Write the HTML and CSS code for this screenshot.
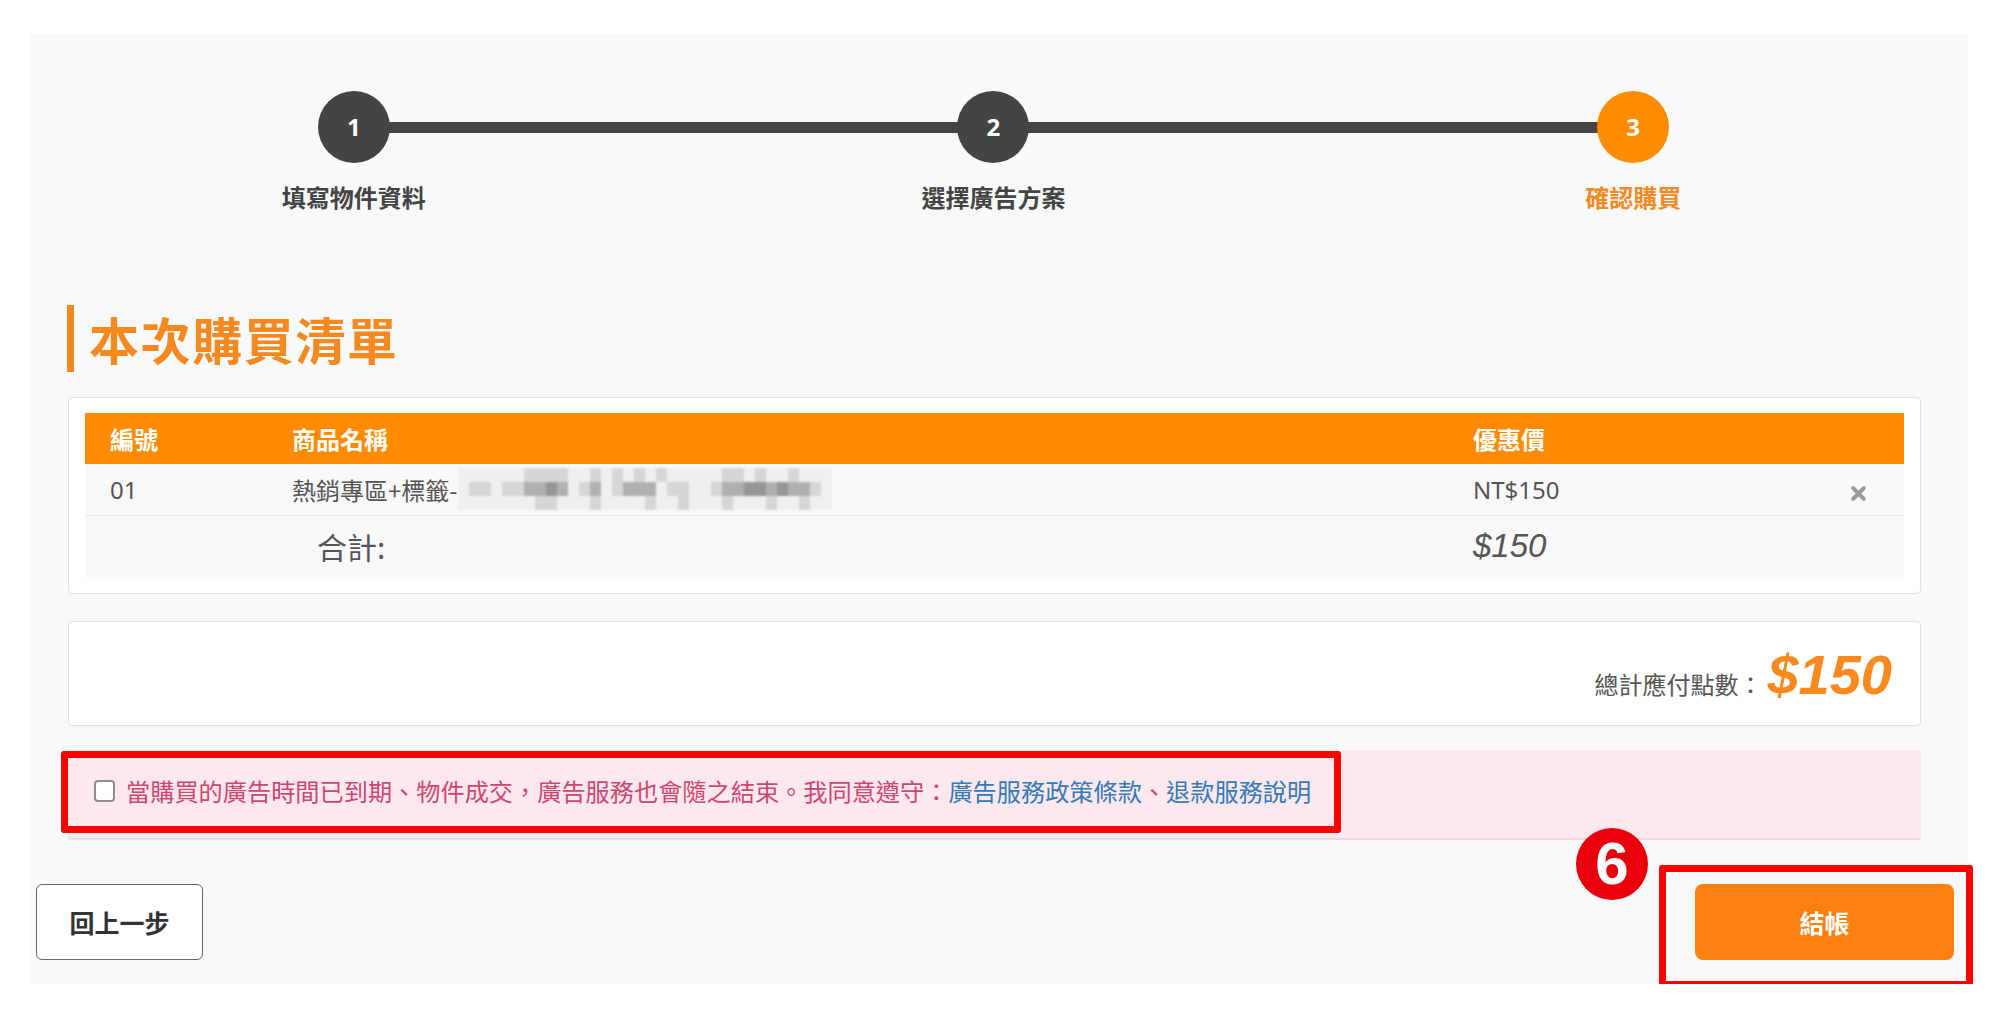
FILE: index.html
```html
<!DOCTYPE html>
<html lang="zh-Hant">
<head>
<meta charset="utf-8">
<title>確認購買</title>
<link rel="stylesheet" href="styles.css">
</head>
<body>
<div class="panel">
  <div class="stepper">
    <div class="step"><div class="dot">1</div><div class="step-label">填寫物件資料</div></div>
    <div class="step"><div class="dot">2</div><div class="step-label">選擇廣告方案</div></div>
    <div class="step active"><div class="dot">3</div><div class="step-label">確認購買</div></div>
  </div>

  <div class="content">
    <h2 class="title">本次購買清單</h2>

    <div class="card cart">
      <table class="cart-table">
        <colgroup>
          <col class="w-no"><col class="w-name"><col class="w-price"><col class="w-act">
        </colgroup>
        <thead>
          <tr><th>編號</th><th>商品名稱</th><th>優惠價</th><th></th></tr>
        </thead>
        <tbody>
          <tr class="item">
            <td class="num">01</td>
            <td><span class="pname">熱銷專區+標籤-</span><span class="mosaic">
<i class="l"></i><i class="l"></i><i class="l"></i><i class="l"></i><i class="l"></i><i class="l"></i><i class="m"></i><i class="m"></i><i class="m"></i><i class="m"></i><i class="l"></i><i class="l"></i><i class="m"></i><i class="l"></i><i class="m"></i><i class="l"></i><i class="m"></i><i class="l"></i><i class="m"></i><i class="l"></i><i class="l"></i><i class="l"></i><i class="l"></i><i class="l"></i><i class="m"></i><i class="m"></i><i class="l"></i><i class="m"></i><i class="l"></i><i class="l"></i><i class="m"></i><i class="l"></i><i class="l"></i><i class="l"></i>
<i class="l"></i><i class="m"></i><i class="m"></i><i class="l"></i><i class="m"></i><i class="m"></i><i class="d"></i><i class="d"></i><i class="k"></i><i class="d"></i><i class="l"></i><i class="m"></i><i class="d"></i><i class="l"></i><i class="m"></i><i class="d"></i><i class="d"></i><i class="d"></i><i class="l"></i><i class="m"></i><i class="m"></i><i class="l"></i><i class="l"></i><i class="m"></i><i class="d"></i><i class="d"></i><i class="k"></i><i class="k"></i><i class="d"></i><i class="k"></i><i class="d"></i><i class="d"></i><i class="m"></i><i class="l"></i>
<i class="l"></i><i class="l"></i><i class="l"></i><i class="l"></i><i class="l"></i><i class="l"></i><i class="l"></i><i class="m"></i><i class="m"></i><i class="l"></i><i class="l"></i><i class="l"></i><i class="m"></i><i class="l"></i><i class="l"></i><i class="l"></i><i class="l"></i><i class="m"></i><i class="l"></i><i class="l"></i><i class="m"></i><i class="l"></i><i class="l"></i><i class="l"></i><i class="m"></i><i class="l"></i><i class="l"></i><i class="l"></i><i class="m"></i><i class="l"></i><i class="l"></i><i class="m"></i><i class="l"></i><i class="l"></i>
</span></td>
            <td class="num">NT$150</td>
            <td class="act">
              <svg class="x-icon" viewBox="0 0 16 16" width="17" height="17" aria-hidden="true">
                <path d="M3 3 L13 13 M13 3 L3 13" stroke="#9a9a9a" stroke-width="3.8" stroke-linecap="round" fill="none"/>
              </svg>
            </td>
          </tr>
          <tr class="sum">
            <td></td>
            <td class="sum-label">合計:</td>
            <td class="sum-val">$150</td>
            <td></td>
          </tr>
        </tbody>
      </table>
    </div>

    <div class="card total">
      <div class="total-line"><span class="total-label">總計應付點數：</span><span class="total-amount">$150</span></div>
    </div>

    <div class="alert">
      <input type="checkbox" class="agree">
      <span class="alert-text">當購買的廣告時間已到期、物件成交，廣告服務也會隨之結束。我同意遵守：<a class="link">廣告服務政策條款</a>、<a class="link">退款服務說明</a></span>
    </div>
  </div>

  <div class="actions">
    <button class="btn btn-back">回上一步</button>
    <button class="btn btn-pay">結帳</button>
  </div>

  <div class="mark mark-terms"></div>
  <div class="mark mark-pay"></div>
  <div class="badge">6</div>
</div>
</body>
</html>
```

FILE: styles.css
```css
* { box-sizing: border-box; }

html, body {
  margin: 0;
  padding: 0;
  background: #ffffff;
}

body {
  font-family: "Noto Sans CJK TC", "Noto Sans", sans-serif;
  color: #555;
}

.panel {
  position: relative;
  margin: 34px 31px 0 31px;
  height: 950px;
  background: #f8f9fa;
  padding-bottom: 24px;
}

/* ---------- stepper ---------- */
.stepper {
  position: relative;
  display: grid;
  grid-template-columns: repeat(3, 1fr);
  margin: 0 15px 0 3px;
  padding-top: 57px;
}

.stepper::before {
  content: "";
  position: absolute;
  top: 88px;
  left: 16.6667%;
  right: 16.6667%;
  height: 11px;
  background: #444;
}

.step {
  display: flex;
  flex-direction: column;
  align-items: center;
}

.dot {
  position: relative;
  z-index: 1;
  width: 72px;
  height: 72px;
  border-radius: 50%;
  background: #444;
  color: #fff;
  font-family: "Noto Sans", sans-serif;
  font-weight: 700;
  font-size: 24px;
  line-height: 72px;
  text-align: center;
}

.step-label {
  margin-top: 16px;
  font-size: 24px;
  line-height: 36px;
  font-weight: 700;
  color: #444;
}

.step.active .dot { background: #fd8c00; }
.step.active .step-label { color: #f08a22; }

/* ---------- content ---------- */
.content {
  margin: 0 47px 0 37px;
}

.title {
  margin: 90px 0 0 -1px;
  height: 67px;
  border-left: 7px solid #f5891f;
  padding-left: 15px;
  font-size: 50px;
  line-height: 67px;
  font-weight: 700;
  letter-spacing: 1.6px;
  color: #f5891f;
}

.card {
  background: #fff;
  border: 1px solid #dfe1e4;
  border-radius: 4px;
}

.cart {
  margin-top: 25px;
  padding: 15px 16px 16px 16px;
}

.cart-table {
  width: 100%;
  table-layout: fixed;
  border-collapse: collapse;
  border-spacing: 0;
}

.w-no { width: 182px; }
.w-name { width: 1181px; }
.w-price { width: 364px; }
.w-act { width: 92px; }

.cart-table th {
  height: 51px;
  padding: 0 0 0 25px;
  background: #fd8b02;
  color: #fff;
  font-size: 24px;
  font-weight: 700;
  text-align: left;
  vertical-align: middle;
}

.cart-table td {
  padding: 0 0 0 25px;
  vertical-align: middle;
  text-align: left;
  white-space: nowrap;
}

.item td {
  height: 51px;
  background: #f9f9f9;
  font-size: 24px;
  color: #555;
}

.item td.num {
  font-family: "Noto Sans", "Noto Sans CJK TC", sans-serif;
}

.pname {
  vertical-align: middle;
}

.mosaic {
  display: inline-grid;
  grid-template-columns: repeat(34, 11px);
  grid-auto-rows: 14px;
  vertical-align: middle;
  filter: blur(0.8px);
}

.mosaic i { display: block; }
.mosaic .l { background: #efefef; }
.mosaic .m { background: #d6d6d6; }
.mosaic .d { background: #b0b0b0; }
.mosaic .k { background: #969696; }

.cart-table td.act {
  padding: 0;
  text-align: center;
}

.x-icon { display: inline-block; vertical-align: middle; }

.sum td {
  height: 62px;
  background: #f9f9f9;
  border-top: 1px solid #e9e9e9;
}

.sum td.sum-label {
  padding-left: 50px;
  font-size: 30px;
  color: #555;
}

.sum td.sum-val {
  font-family: "Liberation Sans", sans-serif;
  font-style: italic;
  font-size: 33px;
  color: #555;
}

/* ---------- total ---------- */
.total {
  margin-top: 27px;
  height: 105px;
  display: flex;
  justify-content: flex-end;
  align-items: flex-end;
  padding: 0 28px 22px 0;
}

.total-line {
  font-size: 24px;
  line-height: 1;
  white-space: nowrap;
}

.total-label {
  color: #555;
  font-size: 24px;
}

.total-amount {
  margin-left: 5px;
  font-family: "Liberation Sans", sans-serif;
  font-weight: 700;
  font-style: italic;
  font-size: 56px;
  line-height: 56px;
  color: #f7891f;
}

/* ---------- alert ---------- */
.alert {
  margin-top: 24px;
  height: 90px;
  display: flex;
  align-items: center;
  padding: 0 0 7px 26px;
  background: #fde8ee;
  border-radius: 3px;
  border-bottom: 2px solid #f2d6de;
}

.agree {
  appearance: none;
  -webkit-appearance: none;
  margin: 0;
  width: 21px;
  height: 22px;
  border: 2px solid #8d8d8d;
  border-radius: 4px;
  background: #fff;
  flex: none;
}

.alert-text {
  margin-left: 11px;
  font-size: 24.2px;
  line-height: 34px;
  color: #cd4771;
  white-space: nowrap;
}

.link {
  color: #337ab7;
  text-decoration: none;
}

/* ---------- actions ---------- */
.actions {
  display: flex;
  justify-content: space-between;
  align-items: center;
  margin: 44px 14px 0 5px;
}

.btn {
  height: 76px;
  font-family: "Noto Sans CJK TC", sans-serif;
  font-size: 25px;
  font-weight: 700;
  cursor: pointer;
}

.btn-back {
  width: 167px;
  background: #fff;
  border: 1px solid #666;
  border-radius: 6px;
  color: #333;
}

.btn-pay {
  width: 259px;
  background: #fb8010;
  border: none;
  border-radius: 8px;
  color: #fff;
}

/* ---------- annotation overlays ---------- */
.mark {
  position: absolute;
  border: 7px solid #ff0000;
  border-radius: 3px;
}

.mark-terms {
  left: 30px;
  top: 717px;
  width: 1280px;
  height: 82px;
}

.mark-pay {
  left: 1628px;
  top: 831px;
  width: 314px;
  height: 123px;
}

.badge {
  position: absolute;
  left: 1545px;
  top: 794px;
  width: 72px;
  height: 72px;
  border-radius: 50%;
  background: #e8000b;
  color: #fff;
  font-family: "Liberation Sans", sans-serif;
  font-weight: 700;
  font-size: 60px;
  line-height: 72px;
  text-align: center;
}
```
